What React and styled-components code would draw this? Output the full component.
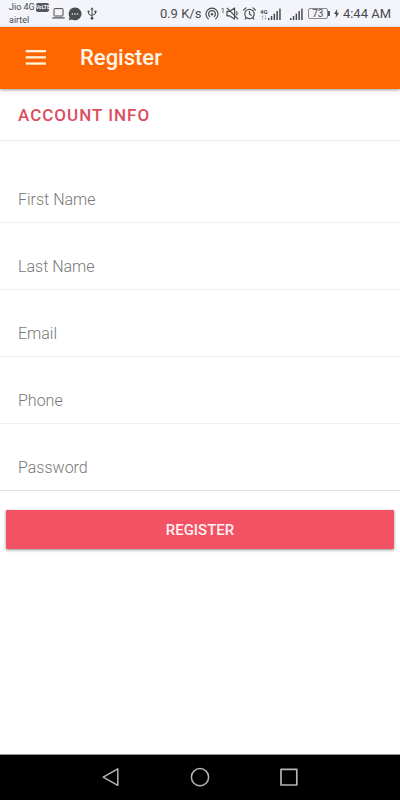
import * as React from 'react'
import styled, { createGlobalStyle } from 'styled-components'

const GlobalStyle = createGlobalStyle`
  *, *::before, *::after {
    box-sizing: border-box;
  }

  body {
    margin: 0;
    background: #fff;
    font-family: Roboto, "Liberation Sans", sans-serif;
  }
`

const Screen = styled.div`
  display: flex;
  flex-direction: column;
  min-height: 100vh;
`

const StatusBar = styled.div`
  display: flex;
  align-items: center;
  justify-content: space-between;
  height: 27px;
  padding: 0 9px;
  background: #f3f5fa;
  color: #4a4b4f;
`

const StatusGroup = styled.div`
  display: flex;
  align-items: center;
  gap: ${({ $gap }) => $gap}px;

  svg {
    display: block;
    flex: none;
  }
`

const Carriers = styled.div`
  display: flex;
  flex-direction: column;
  font-size: 9px;
  line-height: 13px;
`

const Carrier = styled.div`
  display: flex;
  align-items: center;
  gap: 1px;
`

const VolteBadge = styled.span`
  width: 13px;
  height: 9px;
  border-radius: 2px;
  background: #56575b;
  color: #f3f5fa;
  font-size: 5px;
  font-weight: 700;
  line-height: 9px;
  text-align: center;
`

const StatusText = styled.span`
  font-size: 13px;
  line-height: 16px;
  white-space: nowrap;
`

const HotspotCount = styled.sup`
  align-self: flex-start;
  font-size: 8px;
  line-height: 8px;
`

const Network = styled.span`
  display: flex;
  align-items: flex-start;
`

const NetworkType = styled.span`
  display: flex;
  flex-direction: column;
  align-items: center;
  width: 8px;
  font-size: 6px;
  font-weight: 700;
  line-height: 7px;
`

const Battery = styled.span`
  position: relative;
  width: 20px;
  height: 11px;
  margin-right: 2px;
  border: 1px solid #8b8c90;
  border-radius: 2px;
  font-size: 10px;
  line-height: 9px;
  text-align: center;

  &::after {
    content: "";
    position: absolute;
    top: 2px;
    right: -3px;
    width: 2px;
    height: 5px;
    background: #56575b;
  }
`

const Toolbar = styled.header`
  position: relative;
  display: flex;
  align-items: center;
  gap: 33px;
  height: 62px;
  padding: 0 24px;
  background: #ff6600;
  box-shadow: 0 1px 3px rgba(0, 0, 0, 0.4);
`

const MenuButton = styled.button`
  display: flex;
  padding: 0;
  border: 0;
  background: none;
  color: #fff3dc;
  cursor: pointer;
`

const Title = styled.h1`
  margin: 0;
  color: #fff6ea;
  font-size: 22px;
  font-weight: 500;
  line-height: 28px;
`

const Form = styled.form`
  display: flex;
  flex: 1;
  flex-direction: column;
`

const SectionTitle = styled.h2`
  margin: 0;
  padding: 15px 18px 13px;
  border-bottom: 1px solid #e8e8e8;
  color: #dc4c60;
  font-size: 17px;
  font-weight: 500;
  letter-spacing: 1px;
  line-height: 23px;
`

const Fields = styled.div`
  display: flex;
  flex-direction: column;
  padding-top: 15px;
  border-bottom: 1px solid #e2e2e2;
`

const Field = styled.div`
  position: relative;
  padding: 30px 18px 6px;
  border-bottom: 1px solid #f0f0f0;

  &:last-child {
    border-bottom: 0;
  }
`

const FieldLabel = styled.label`
  position: absolute;
  top: ${({ $floating }) => ($floating ? 12 : 34)}px;
  left: 18px;
  color: #777;
  font-size: ${({ $floating }) => ($floating ? 12 : 16)}px;
  font-weight: 300;
  line-height: 20px;
  pointer-events: none;
  transition: top 0.15s, font-size 0.15s;
`

const FieldInput = styled.input`
  display: block;
  width: 100%;
  height: 30px;
  padding: 0;
  border: 0;
  outline: 0;
  background: transparent;
  color: #333;
  font: inherit;
  font-size: 16px;
`

const SubmitButton = styled.button`
  height: 39px;
  margin: 19px 6px;
  border: 0;
  border-radius: 1px;
  background: #f25264;
  box-shadow: 0 1px 3px rgba(0, 0, 0, 0.45);
  color: #fff0f2;
  font-family: inherit;
  font-size: 15px;
  font-weight: 500;
  cursor: pointer;
`

const NavBar = styled.nav`
  display: flex;
  align-items: center;
  justify-content: center;
  gap: 65px;
  height: 46px;
  border-top: 1px solid #8c9490;
  background: #000;
`

const NavButton = styled.button`
  display: flex;
  padding: 0;
  border: 0;
  background: none;
  color: #b4b4b4;
  cursor: pointer;
`

const LaptopIcon = () => (
  <svg width="13" height="11" viewBox="0 0 13 11" fill="none" stroke="#4a4b4f">
    <rect x="2" y="0.6" width="9" height="7.4" rx="0.6" />
    <path d="M0.3 9.9h12.4" strokeWidth="1.2" />
  </svg>
)

const ChatIcon = () => (
  <svg width="14" height="14" viewBox="0 0 14 14">
    <path d="M7 0.5a6.4 6.4 0 1 1-3 12L0.9 13.3l0.6-3.2A6.4 6.4 0 0 1 7 0.5z" fill="#4a4b4f" />
    <g fill="#f3f5fa">
      <circle cx="4.4" cy="7" r="0.8" />
      <circle cx="7" cy="7" r="0.8" />
      <circle cx="9.6" cy="7" r="0.8" />
    </g>
  </svg>
)

const UsbIcon = () => (
  <svg width="12" height="13" viewBox="-2 0 12 13" fill="none" stroke="#4a4b4f">
    <path d="M5 2v9M1.5 4.6v2.2L5 9M8.5 4.8v1.8L5 8.4" />
    <path d="M5 0.2l1.7 2.4H3.3z" fill="#4a4b4f" stroke="none" />
    <circle cx="5" cy="11.3" r="1.4" fill="#4a4b4f" stroke="none" />
    <circle cx="1.5" cy="4.6" r="1.1" fill="#4a4b4f" stroke="none" />
    <rect x="7.5" y="3.6" width="2" height="2" fill="#4a4b4f" stroke="none" />
  </svg>
)

const HotspotIcon = () => (
  <svg width="14" height="13" viewBox="0 0 14 13" fill="none" stroke="#4a4b4f" strokeWidth="1.2" strokeLinecap="round">
    <path d="M3.2 11.8a6 6 0 1 1 7.6 0" />
    <path d="M4.8 9.6a3.4 3.4 0 1 1 4.4 0" />
    <circle cx="7" cy="7.2" r="1.2" fill="#4a4b4f" stroke="none" />
  </svg>
)

const MuteIcon = () => (
  <svg width="13" height="13" viewBox="0 0 13 13" fill="none" stroke="#4a4b4f" strokeWidth="1.2" strokeLinejoin="round">
    <path d="M1 4.4h2.4L8.6 1v11L3.4 8.8H1z" />
    <path d="M0.8 0.8l11.4 11.4" />
    <path d="M10.4 4.4c1 1.2 1 2.8 0.2 4" />
  </svg>
)

const AlarmIcon = () => (
  <svg width="13" height="13" viewBox="0 0 13 13" fill="none" stroke="#4a4b4f" strokeWidth="1.2" strokeLinecap="round">
    <circle cx="6.5" cy="7" r="4.7" />
    <path d="M6.5 4.6V7l1.8 1.2M0.7 3L3 0.9M12.3 3L10 0.9M3.2 10.6l-1 1.4M9.8 10.6l1 1.4" />
  </svg>
)

const DataArrowsIcon = () => (
  <svg width="6" height="5" viewBox="0 0 6 5" fill="none" stroke="#b3b5ba" strokeWidth="0.8">
    <path d="M1.5 5V0.6M0.4 1.8l1.1-1.2 1.1 1.2M4.5 0v4.4M3.4 3.2l1.1 1.2 1.1-1.2" />
  </svg>
)

const SignalIcon = () => (
  <svg width="13" height="12" viewBox="0 0 13 12" fill="#4a4b4f">
    <rect x="0" y="10" width="1.5" height="2" />
    <rect x="2.8" y="8" width="1.5" height="4" />
    <rect x="5.6" y="5.6" width="1.5" height="6.4" />
    <rect x="8.4" y="3" width="1.5" height="9" />
    <rect x="11.2" y="0.6" width="1.5" height="11.4" />
  </svg>
)

const BoltIcon = () => (
  <svg width="5" height="9" viewBox="0 0 5 9" fill="#4a4b4f">
    <path d="M3.2 0L0 5h2L1.6 9 5 3.8H3z" />
  </svg>
)

const MenuIcon = () => (
  <svg width="23" height="16" viewBox="0 0 23 16" fill="currentColor">
    <rect x="1.7" y="0" width="20.3" height="2.3" />
    <rect x="1.7" y="6.2" width="20.3" height="2.3" />
    <rect x="1.7" y="12.4" width="20.3" height="2.3" />
  </svg>
)

const BackIcon = () => (
  <svg width="24" height="22" viewBox="0 0 24 22" fill="none" stroke="currentColor" strokeWidth="1.5" strokeLinejoin="round">
    <path d="M18.8 1.9v16.4L4.2 10.1z" />
  </svg>
)

const HomeIcon = () => (
  <svg width="24" height="22" viewBox="0 0 24 22" fill="none" stroke="currentColor" strokeWidth="1.5">
    <circle cx="12" cy="10.2" r="8.6" />
  </svg>
)

const RecentsIcon = () => (
  <svg width="24" height="22" viewBox="0 0 24 22" fill="none" stroke="currentColor" strokeWidth="1.7" strokeLinejoin="round">
    <rect x="4" y="2.4" width="15.8" height="15.6" />
  </svg>
)

const FIELDS = [
  { name: 'firstName', label: 'First Name', type: 'text' },
  { name: 'lastName', label: 'Last Name', type: 'text' },
  { name: 'email', label: 'Email', type: 'email' },
  { name: 'phone', label: 'Phone', type: 'tel' },
  { name: 'password', label: 'Password', type: 'password' },
]

const FloatingField = ({ name, label, type }) => {
  const [value, setValue] = React.useState('')
  const [focused, setFocused] = React.useState(false)

  return (
    <Field>
      <FieldLabel htmlFor={name} $floating={focused || value.length > 0}>{label}</FieldLabel>
      <FieldInput
        id={name}
        name={name}
        type={type}
        value={value}
        onChange={(event) => setValue(event.target.value)}
        onFocus={() => setFocused(true)}
        onBlur={() => setFocused(false)}
      />
    </Field>
  )
}

const PhoneStatus = () => (
  <StatusBar>
    <StatusGroup $gap={3}>
      <Carriers>
        <Carrier>Jio 4G <VolteBadge>VoLTE</VolteBadge></Carrier>
        <Carrier>airtel</Carrier>
      </Carriers>
      <LaptopIcon />
      <ChatIcon />
      <UsbIcon />
    </StatusGroup>
    <StatusGroup $gap={4}>
      <StatusText>0.9 K/s</StatusText>
      <StatusGroup $gap={1}>
        <HotspotIcon />
        <HotspotCount>1</HotspotCount>
        <MuteIcon />
      </StatusGroup>
      <AlarmIcon />
      <Network>
        <NetworkType>4G<DataArrowsIcon /></NetworkType>
        <SignalIcon />
      </Network>
      <StatusGroup $gap={5}>
        <span />
        <SignalIcon />
        <Battery>73</Battery>
      </StatusGroup>
      <BoltIcon />
      <StatusText>4:44 AM</StatusText>
    </StatusGroup>
  </StatusBar>
)

const App = () => {
  return (
    <Screen>
      <GlobalStyle />
      <PhoneStatus />
      <Toolbar>
        <MenuButton type="button" aria-label="Menu"><MenuIcon /></MenuButton>
        <Title>Register</Title>
      </Toolbar>
      <Form onSubmit={(event) => event.preventDefault()}>
        <SectionTitle>ACCOUNT INFO</SectionTitle>
        <Fields>
          {FIELDS.map((field) => (
            <FloatingField key={field.name} {...field} />
          ))}
        </Fields>
        <SubmitButton type="submit">REGISTER</SubmitButton>
      </Form>
      <NavBar>
        <NavButton type="button" aria-label="Back"><BackIcon /></NavButton>
        <NavButton type="button" aria-label="Home"><HomeIcon /></NavButton>
        <NavButton type="button" aria-label="Recent apps"><RecentsIcon /></NavButton>
      </NavBar>
    </Screen>
  )
}

export default App
